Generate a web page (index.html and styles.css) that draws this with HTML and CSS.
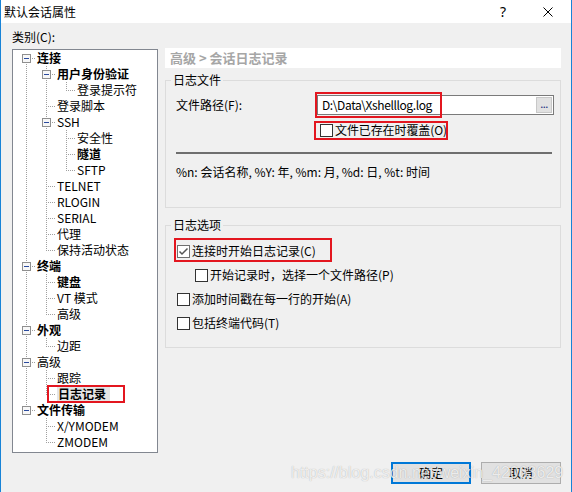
FILE: index.html
```html
<!DOCTYPE html>
<html lang="zh-CN">
<head>
<meta charset="utf-8">
<title>默认会话属性</title>
<link rel="stylesheet" href="styles.css">
</head>
<body>
<div class="window">
  <div class="titlebar">
    <span class="title">默认会话属性</span>
    <span class="tb-help">?</span>
    <svg class="tb-close" width="10" height="10" viewBox="0 0 10 10"><path d="M0.5 0.5L9.5 9.5M9.5 0.5L0.5 9.5" stroke="#000" stroke-width="1"/></svg>
  </div>

  <div class="main">
    <div class="left">
      <div class="cat-label">类别(C):</div>
      <div class="tree">
        <div class="row"><span class="c eb"><svg class="exp" width="9" height="9" viewBox="0 0 9 9"><rect x="0.5" y="0.5" width="8" height="8" fill="#f7f7f7" stroke="#8f8f8f"/><path d="M2 4.5h5" stroke="#2a4a9e"/></svg></span><span class="t b">连接</span></div>
        <div class="row"><span class="c i"></span><span class="c etb"><svg class="exp" width="9" height="9" viewBox="0 0 9 9"><rect x="0.5" y="0.5" width="8" height="8" fill="#f7f7f7" stroke="#8f8f8f"/><path d="M2 4.5h5" stroke="#2a4a9e"/></svg></span><span class="t b">用户身份验证</span></div>
        <div class="row"><span class="c i"></span><span class="c i"></span><span class="c ell"></span><span class="t">登录提示符</span></div>
        <div class="row"><span class="c i"></span><span class="c tee"></span><span class="t">登录脚本</span></div>
        <div class="row"><span class="c i"></span><span class="c etb"><svg class="exp" width="9" height="9" viewBox="0 0 9 9"><rect x="0.5" y="0.5" width="8" height="8" fill="#f7f7f7" stroke="#8f8f8f"/><path d="M2 4.5h5" stroke="#2a4a9e"/></svg></span><span class="t">SSH</span></div>
        <div class="row"><span class="c i"></span><span class="c i"></span><span class="c tee"></span><span class="t">安全性</span></div>
        <div class="row"><span class="c i"></span><span class="c i"></span><span class="c tee"></span><span class="t b">隧道</span></div>
        <div class="row"><span class="c i"></span><span class="c i"></span><span class="c ell"></span><span class="t">SFTP</span></div>
        <div class="row"><span class="c i"></span><span class="c tee"></span><span class="t">TELNET</span></div>
        <div class="row"><span class="c i"></span><span class="c tee"></span><span class="t">RLOGIN</span></div>
        <div class="row"><span class="c i"></span><span class="c tee"></span><span class="t">SERIAL</span></div>
        <div class="row"><span class="c i"></span><span class="c tee"></span><span class="t">代理</span></div>
        <div class="row"><span class="c i"></span><span class="c ell"></span><span class="t">保持活动状态</span></div>
        <div class="row"><span class="c etb"><svg class="exp" width="9" height="9" viewBox="0 0 9 9"><rect x="0.5" y="0.5" width="8" height="8" fill="#f7f7f7" stroke="#8f8f8f"/><path d="M2 4.5h5" stroke="#2a4a9e"/></svg></span><span class="t b">终端</span></div>
        <div class="row"><span class="c i"></span><span class="c tee"></span><span class="t b">键盘</span></div>
        <div class="row"><span class="c i"></span><span class="c tee"></span><span class="t">VT 模式</span></div>
        <div class="row"><span class="c i"></span><span class="c ell"></span><span class="t">高级</span></div>
        <div class="row"><span class="c etb"><svg class="exp" width="9" height="9" viewBox="0 0 9 9"><rect x="0.5" y="0.5" width="8" height="8" fill="#f7f7f7" stroke="#8f8f8f"/><path d="M2 4.5h5" stroke="#2a4a9e"/></svg></span><span class="t b">外观</span></div>
        <div class="row"><span class="c i"></span><span class="c ell"></span><span class="t">边距</span></div>
        <div class="row"><span class="c etb"><svg class="exp" width="9" height="9" viewBox="0 0 9 9"><rect x="0.5" y="0.5" width="8" height="8" fill="#f7f7f7" stroke="#8f8f8f"/><path d="M2 4.5h5" stroke="#2a4a9e"/></svg></span><span class="t">高级</span></div>
        <div class="row"><span class="c i"></span><span class="c tee"></span><span class="t">跟踪</span></div>
        <div class="row"><span class="c i"></span><span class="c ell"></span><span class="t b sel">日志记录</span></div>
        <div class="row"><span class="c et"><svg class="exp" width="9" height="9" viewBox="0 0 9 9"><rect x="0.5" y="0.5" width="8" height="8" fill="#f7f7f7" stroke="#8f8f8f"/><path d="M2 4.5h5" stroke="#2a4a9e"/></svg></span><span class="t b">文件传输</span></div>
        <div class="row"><span class="c"></span><span class="c tee"></span><span class="t">X/YMODEM</span></div>
        <div class="row"><span class="c"></span><span class="c ell"></span><span class="t">ZMODEM</span></div>
      </div>
    </div>

    <div class="right">
      <div class="page-header">高级 &gt; 会话日志记录</div>

      <fieldset class="group g1">
        <legend>日志文件</legend>
        <div class="path-row">
          <span class="path-label">文件路径(F):</span>
          <div class="path-input">
            <span class="path-text">D:\Data\Xshelllog.log</span>
            <span class="browse">...</span>
          </div>
        </div>
        <div class="overwrite"><span class="cb"></span><span class="ow-text">文件已存在时覆盖(O)</span></div>
        <div class="sep"></div>
        <div class="note">%n: 会话名称, %Y: 年, %m: 月, %d: 日, %t: 时间</div>
      </fieldset>

      <fieldset class="group g2">
        <legend>日志选项</legend>
        <div class="opt"><span class="cb checked"><svg width="11" height="11" viewBox="0 0 11 11"><path d="M1.5 5.5L4 8L9.5 2.5" fill="none" stroke="#555" stroke-width="1.5"/></svg></span><span>连接时开始日志记录(C)</span></div>
        <div class="opt sub"><span class="cb"></span><span>开始记录时，选择一个文件路径(P)</span></div>
        <div class="opt"><span class="cb"></span><span>添加时间戳在每一行的开始(A)</span></div>
        <div class="opt"><span class="cb"></span><span>包括终端代码(T)</span></div>
      </fieldset>
    </div>
  </div>

  <div class="buttons">
    <button class="btn primary">确定</button>
    <button class="btn">取消</button>
  </div>

  <div class="mark mark-path"></div>
  <div class="mark mark-over"></div>
  <div class="mark mark-start"></div>
  <div class="mark mark-tree"></div>
  <div class="watermark">https://blog.csdn.net/weixin_42063629</div>
</div>
</body>
</html>
```

FILE: styles.css
```css
* { box-sizing: border-box; }

html, body {
  margin: 0;
  padding: 0;
  background: #f0f0f0;
}

body {
  font-family: "Noto Sans CJK SC", "Noto Sans", sans-serif;
  font-size: 12px;
  line-height: 16px;
  color: #000;
}

.window {
  position: relative;
  width: 572px;
  height: 492px;
  background: #f0f0f0;
  border-left: 1px solid #1883d7;
  border-right: 1px solid #1883d7;
  overflow: hidden;
}

/* title bar */
.titlebar {
  height: 23px;
  background: #fff;
  display: flex;
  align-items: center;
  padding-left: 3px;
}
.title { flex: 1; }
.tb-help {
  width: 20px;
  text-align: center;
  font-family: "Noto Sans", sans-serif;
  font-size: 14px;
  line-height: 16px;
}
.tb-close {
  display: block;
  margin-left: 30px;
  margin-right: 18px;
}

/* main area */
.main {
  display: flex;
  gap: 7px;
  padding: 6px 0 0 11px;
}

.left {
  width: 146px;
  flex: none;
}
.cat-label {
  height: 16px;
  line-height: 16px;
}

.tree {
  --v: repeating-linear-gradient(to bottom, #a0a0a0 0 1px, transparent 1px 2px);
  --h: repeating-linear-gradient(to right, #a0a0a0 0 1px, transparent 1px 2px);
  margin-top: 4px;
  height: 404px;
  border: 1px solid #828790;
  background: #fff;
  padding-left: 3px;
}
.row {
  display: flex;
  height: 16px;
}
.c {
  flex: none;
  width: 20px;
  height: 16px;
  background-repeat: no-repeat;
}
.c.i {
  background-image: var(--v);
  background-size: 1px 16px;
  background-position: 10px 0;
}
.c.tee, .c.etb {
  background-image: var(--v), var(--h);
  background-size: 1px 16px, 10px 1px;
  background-position: 10px 0, 10px 8px;
}
.c.ell, .c.et {
  background-image: var(--v), var(--h);
  background-size: 1px 9px, 10px 1px;
  background-position: 10px 0, 10px 8px;
}
.c.eb {
  background-image: var(--v), var(--h);
  background-size: 1px 8px, 10px 1px;
  background-position: 10px 8px, 10px 8px;
}
.exp {
  display: block;
  margin: 4px 0 0 6px;
}
.t {
  margin-left: 1px;
  white-space: nowrap;
  line-height: 16px;
}
.t.b { font-weight: 700; }
.t.sel {
  background: #e5e5e5;
  padding: 0 4px 0 1px;
}

/* right pane */
.right {
  width: 396px;
  flex: none;
  padding-top: 19px;
}
.page-header {
  height: 20px;
  background: #fff;
  padding-left: 5px;
  font-size: 13px;
  font-weight: 700;
  line-height: 20px;
  color: #a6a6a6;
}

.group {
  width: 100%;
  margin: 0;
  min-inline-size: 0;
  border: 1px solid #dcdcdc;
}
.group legend {
  padding: 0 2px;
  margin-left: -5px;
  line-height: 16px;
}
.g1 {
  margin-top: 4px;
  padding: 7px 6px 27px 10px;
}
.g2 {
  margin-top: 9px;
  padding: 6px 6px 12px 10px;
}

.path-row {
  display: flex;
  align-items: center;
  height: 20px;
}
.path-label {
  width: 141px;
  flex: none;
}
.path-input {
  width: 237px;
  height: 20px;
  flex: none;
  display: flex;
  align-items: center;
  border: 1px solid #7a7a7a;
  background: #fff;
}
.path-text {
  flex: 1;
  padding-left: 4px;
  white-space: nowrap;
  letter-spacing: -0.4px;
}
.browse {
  width: 16px;
  height: 16px;
  margin-right: 1px;
  background: #e1e1e1;
  border: 1px solid #c8c8c8;
  color: #1a2a80;
  font-size: 11px;
  line-height: 11px;
  text-align: center;
  letter-spacing: -0.5px;
}

.overwrite {
  display: flex;
  align-items: center;
  height: 20px;
  margin-top: 5px;
  padding-left: 144px;
}
.cb {
  flex: none;
  width: 13px;
  height: 13px;
  border: 1px solid #333;
  background: #fff;
  display: flex;
  align-items: center;
  justify-content: center;
}
.cb.checked { border-color: #707070; }
.cb svg { display: block; }
.overwrite .cb { margin-right: 2px; }
.ow-text { letter-spacing: -0.1px; }

.sep {
  height: 2px;
  margin: 12px 2px 0 0;
  background: #6e6e6e;
}
.note {
  margin-top: 10px;
  line-height: 16px;
}

.opt {
  display: flex;
  align-items: center;
  height: 24px;
}
.opt .cb {
  margin: 0 2px 0 1px;
}
.opt.sub .cb {
  margin-left: 19px;
}

/* bottom buttons */
.buttons {
  display: flex;
  justify-content: flex-end;
  gap: 10px;
  padding-right: 10px;
  margin-top: 9px;
}
.btn {
  width: 80px;
  height: 22px;
  padding: 0;
  background: #e1e1e1;
  border: 1px solid #adadad;
  font-family: "Noto Sans CJK SC", sans-serif;
  font-size: 12px;
  line-height: 18px;
  color: #000;
}
.btn.primary {
  border: 2px solid #0078d7;
}

/* red annotation boxes drawn over the dialog */
.mark {
  position: absolute;
  border: 2px solid #e3161f;
}
.mark-path { left: 314px; top: 92px; width: 127px; height: 26px; }
.mark-over { left: 313px; top: 121px; width: 134px; height: 19px; }
.mark-start { left: 173px; top: 238px; width: 158px; height: 24px; }
.mark-tree { left: 46px; top: 385px; width: 78px; height: 18px; }

/* watermark over the buttons */
.watermark {
  position: absolute;
  left: 290px;
  top: 464px;
  font-family: "Liberation Sans", Arial, sans-serif;
  font-size: 16px;
  line-height: 18px;
  white-space: nowrap;
  color: rgba(255, 255, 255, 0.78);
  text-shadow: 0 0 1px rgba(0, 0, 0, 0.3);
  pointer-events: none;
}
```
